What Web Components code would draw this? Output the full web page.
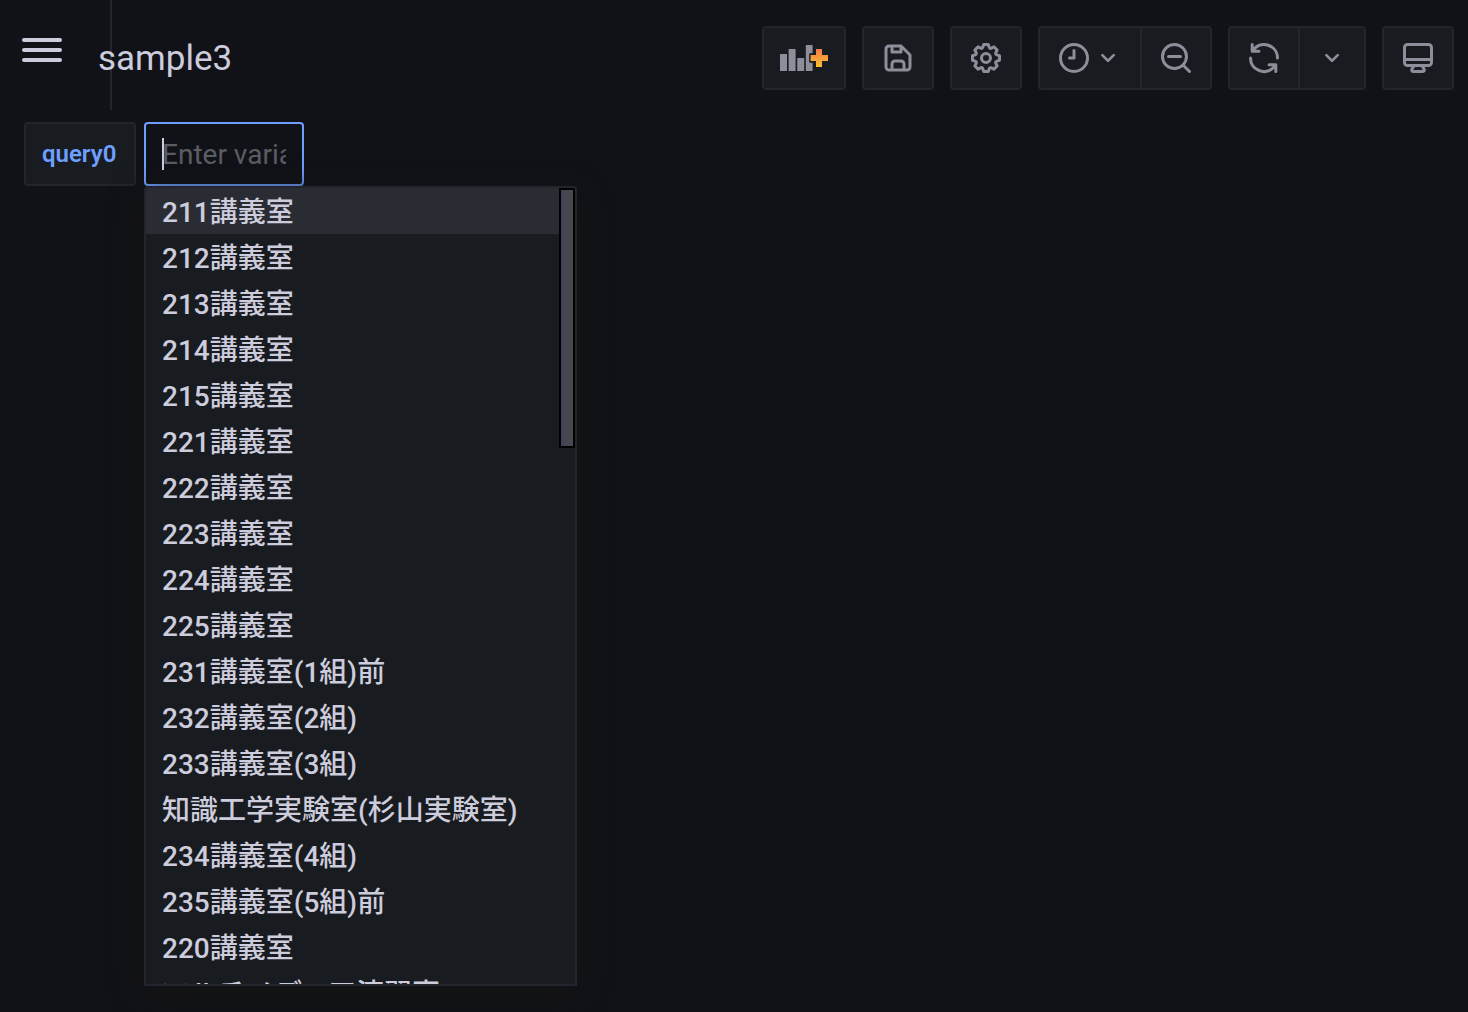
<!DOCTYPE html>
<html lang="ja">
<head>
<meta charset="utf-8">
<meta name="viewport" content="width=device-width, initial-scale=1">
<title>sample3</title>
<style>
body {
  --bg: #111217;
  --panel: #181b1f;
  --border: #22252b;
  --hover: #2a2c34;
  --text: #ccccdc;
  --muted: #8e8e9b;
  --blue: #6e9fff;
  margin: 0;
  background: var(--bg);
  color: var(--text);
  font-family: Roboto, "Noto Sans CJK JP", sans-serif;
  font-size: 28px;
}
</style>
</head>
<body>
<dashboard-page>
  <dashboard-toolbar slot="header" heading="sample3"></dashboard-toolbar>
  <variable-picker label="query0"></variable-picker>
</dashboard-page>

<script>
const ICONS = {
  save: 'M20.71,9.29l-6-6a1,1,0,0,0-.32-.21A1.09,1.09,0,0,0,14,3H6A3,3,0,0,0,3,6V18a3,3,0,0,0,3,3H18a3,3,0,0,0,3-3V10A1,1,0,0,0,20.71,9.29ZM9,5h4V7H9Zm6,14H9V16a1,1,0,0,1,1-1h4a1,1,0,0,1,1,1Zm4-1a1,1,0,0,1-1,1H17V16a3,3,0,0,0-3-3H10a3,3,0,0,0-3,3v3H6a1,1,0,0,1-1-1V6A1,1,0,0,1,6,5H7V8A1,1,0,0,0,8,9h6a1,1,0,0,0,1-1V6.41l4,4Z',
  cog: 'M21.32,9.55l-1.89-.63.89-1.78A1,1,0,0,0,20.13,6L18,3.87a1,1,0,0,0-1.15-.19l-1.78.89-.63-1.89A1,1,0,0,0,13.5,2h-3a1,1,0,0,0-.95.68L8.92,4.57,7.14,3.68A1,1,0,0,0,6,3.87L3.87,6a1,1,0,0,0-.19,1.15l.89,1.78-1.89.63A1,1,0,0,0,2,10.5v3a1,1,0,0,0,.68.95l1.89.63-.89,1.78A1,1,0,0,0,3.87,18L6,20.13a1,1,0,0,0,1.15.19l1.78-.89.63,1.89a1,1,0,0,0,.95.68h3a1,1,0,0,0,.95-.68l.63-1.89,1.78.89A1,1,0,0,0,18,20.13L20.13,18a1,1,0,0,0,.19-1.15l-.89-1.78,1.89-.63A1,1,0,0,0,22,13.5v-3A1,1,0,0,0,21.32,9.55ZM20,12.78l-1.2.4A2,2,0,0,0,17.64,16l.57,1.14-1.1,1.1L16,17.64a2,2,0,0,0-2.79,1.16l-.4,1.2H11.22l-.4-1.2A2,2,0,0,0,8,17.64l-1.14.57-1.1-1.1L6.36,16A2,2,0,0,0,5.2,13.18L4,12.78V11.22l1.2-.4A2,2,0,0,0,6.36,8L5.79,6.89l1.1-1.1L8,6.36A2,2,0,0,0,10.82,5.2l.4-1.2h1.56l.4,1.2A2,2,0,0,0,16,6.36l1.14-.57,1.1,1.1L17.64,8a2,2,0,0,0,1.16,2.79l1.2.4ZM12,8a4,4,0,1,0,4,4A4,4,0,0,0,12,8Zm0,6a2,2,0,1,1,2-2A2,2,0,0,1,12,14Z',
  clock: 'M12,2A10,10,0,1,0,22,12,10,10,0,0,0,12,2Zm0,18a8,8,0,1,1,8-8A8,8,0,0,1,12,20ZM12,6a1,1,0,0,0-1,1v4H9a1,1,0,0,0,0,2h3a1,1,0,0,0,1-1V7A1,1,0,0,0,12,6Z',
  down: 'M17,9.17a1,1,0,0,0-1.41,0L12,12.71,8.46,9.17a1,1,0,0,0-1.41,0,1,1,0,0,0,0,1.42l4.24,4.24a1,1,0,0,0,1.42,0L17,10.59A1,1,0,0,0,17,9.17Z',
  zoomout: 'M21.71,20.29,18,16.61A9,9,0,1,0,16.61,18l3.68,3.68a1,1,0,0,0,1.42,0A1,1,0,0,0,21.71,20.29ZM11,18a7,7,0,1,1,7-7A7,7,0,0,1,11,18Zm4-8H7a1,1,0,0,0,0,2h8a1,1,0,0,0,0-2Z',
  sync: 'M19.91,15.51H15.38a1,1,0,0,0,0,2h2.4A8,8,0,0,1,4,12a1,1,0,1,0-2,0,10,10,0,0,0,16.88,7.23V21a1,1,0,0,0,2,0V16.5A1,1,0,0,0,19.91,15.51ZM12,2A10,10,0,0,0,5.12,4.77V3a1,1,0,0,0-2,0V7.5a1,1,0,0,0,1,1h4.5a1,1,0,0,0,0-2H6.22A8,8,0,0,1,20,12a1,1,0,0,0,2,0A10,10,0,0,0,12,2Z',
  monitor: 'M19,2H5A3,3,0,0,0,2,5V15a3,3,0,0,0,3,3H7.64l-.58,1a2,2,0,0,0,0,2,2,2,0,0,0,1.75,1h6.46A2,2,0,0,0,17,21a2,2,0,0,0,0-2l-.59-1H19a3,3,0,0,0,3-3V5A3,3,0,0,0,19,2ZM8.77,20,10,18H14l1.2,2ZM20,15a1,1,0,0,1-1,1H5a1,1,0,0,1-1-1V14H20Zm0-3H4V5A1,1,0,0,1,5,4H19a1,1,0,0,1,1,1Z'
};

class UiIcon extends HTMLElement {
  constructor() {
    super();
    this.attachShadow({ mode: 'open' });
  }

  connectedCallback() {
    const name = this.getAttribute('name');
    const style = `
      <style>
        :host { display: block; width: 36px; height: 36px; }
        :host([name="down"]) { width: 32px; height: 32px; }
        :host([name="panel"]) { width: 48px; }
        svg { display: block; width: 100%; height: 100%; fill: currentColor; }
      </style>`;
    // the "add panel" icon is the only one in two colours
    if (name === 'panel') {
      this.shadowRoot.innerHTML = style + `
        <svg viewBox="0 0 48 36" aria-hidden="true">
          <defs>
            <linearGradient id="plus" x1="0" y1="0" x2="0" y2="1">
              <stop offset="0" stop-color="#f37b4b"/>
              <stop offset="1" stop-color="#fbc02d"/>
            </linearGradient>
          </defs>
          <rect x="0" y="14" width="7" height="17" rx="0.6"/>
          <rect x="8.6" y="9" width="7" height="22" rx="0.6"/>
          <rect x="17.2" y="18" width="7" height="13" rx="0.6"/>
          <path d="M26.4 5h5.6a.6.6 0 0 1 .6.6v7.6h-2.4a1 1 0 0 0-1 1v7.6a1 1 0 0 0 1 1h2.4v7.6a.6.6 0 0 1-.6.6h-5.6a.6.6 0 0 1-.6-.6V5.600a.6.6 0 0 1 .6-.6z"/>
          <path fill="url(#plus)" d="M36 9h6v6h6v6h-6v6h-6v-6h-5.400v-6h5.400z"/>
        </svg>`;
      return;
    }
    this.shadowRoot.innerHTML = style + `
      <svg viewBox="0 0 24 24" aria-hidden="true"><path d="${ICONS[name]}"/></svg>`;
  }
}

class ToolButton extends HTMLElement {
  constructor() {
    super();
    this.attachShadow({ mode: 'open' });
  }

  connectedCallback() {
    this.shadowRoot.innerHTML = `
      <style>
        :host { display: block; }
        button {
          display: flex;
          align-items: center;
          height: 64px;
          margin: 0;
          padding: 0 16px;
          border: 2px solid var(--border);
          border-radius: var(--radius, 4px);
          background: var(--panel);
          color: var(--muted);
          cursor: pointer;
        }
        button:hover { background: var(--hover); }
      </style>
      <button type="button" aria-label="${this.getAttribute('label')}"><slot></slot></button>`;
  }
}

class ButtonGroup extends HTMLElement {
  constructor() {
    super();
    this.attachShadow({ mode: 'open' });
    this.shadowRoot.innerHTML = `
      <style>
        :host { display: flex; }
        ::slotted(:first-child) { --radius: 4px 0 0 4px; }
        ::slotted(:last-child) { --radius: 0 4px 4px 0; margin-left: -2px; }
      </style>
      <slot></slot>`;
  }
}

class DashboardToolbar extends HTMLElement {
  constructor() {
    super();
    this.attachShadow({ mode: 'open' });
  }

  connectedCallback() {
    this.shadowRoot.innerHTML = `
      <style>
        :host { display: block; }
        header {
          display: flex;
          align-items: center;
          height: 116px;
          box-sizing: border-box;
          padding: 0 14px 0 22px;
        }
        .menu {
          display: flex;
          flex-direction: column;
          gap: 6px;
          width: 40px;
          margin: 0 36px 16px 0;
          padding: 0;
          border: 0;
          background: none;
          cursor: pointer;
        }
        .menu span { width: 40px; height: 4px; border-radius: 2px; background: var(--text); }
        .title { position: relative; flex: 1; padding-top: 2px; }
        h1 { margin: 0; font-size: 35px; line-height: 44px; font-weight: 400; }
        /* edge of the collapsed side menu, runs behind the title */
        .edge {
          position: absolute;
          left: 110px;
          top: 0;
          width: 2px;
          height: 110px;
          background: var(--border);
        }
        .actions { display: flex; gap: 16px; }
      </style>
      <div class="edge"></div>
      <header>
        <button class="menu" type="button" aria-label="Toggle menu"><span></span><span></span><span></span></button>
        <div class="title"><h1>${this.getAttribute('heading')}</h1></div>
        <div class="actions">
          <tool-button label="Add panel"><ui-icon name="panel"></ui-icon></tool-button>
          <tool-button label="Save dashboard"><ui-icon name="save"></ui-icon></tool-button>
          <tool-button label="Dashboard settings"><ui-icon name="cog"></ui-icon></tool-button>
          <button-group>
            <tool-button label="Time range"><ui-icon name="clock"></ui-icon><ui-icon name="down"></ui-icon></tool-button>
            <tool-button label="Zoom out"><ui-icon name="zoomout"></ui-icon></tool-button>
          </button-group>
          <button-group>
            <tool-button label="Refresh"><ui-icon name="sync"></ui-icon></tool-button>
            <tool-button label="Refresh interval"><ui-icon name="down"></ui-icon></tool-button>
          </button-group>
          <tool-button label="Cycle view mode"><ui-icon name="monitor"></ui-icon></tool-button>
        </div>
      </header>`;
  }
}

class VariablePicker extends HTMLElement {
  options = [
    '211講義室', '212講義室', '213講義室', '214講義室', '215講義室',
    '221講義室', '222講義室', '223講義室', '224講義室', '225講義室',
    '231講義室(1組)前', '232講義室(2組)', '233講義室(3組)',
    '知識工学実験室(杉山実験室)', '234講義室(4組)', '235講義室(5組)前',
    '220講義室', 'マルチメディア演習室'
  ];

  constructor() {
    super();
    this.attachShadow({ mode: 'open' });
  }

  connectedCallback() {
    this.shadowRoot.innerHTML = `
      <style>
        :host { display: flex; gap: 8px; }
        label {
          display: flex;
          align-items: center;
          min-width: 112px;
          height: 64px;
          box-sizing: border-box;
          padding: 0 16px;
          border: 2px solid var(--border);
          border-radius: 4px;
          background: var(--panel);
          color: var(--blue);
          font-size: 24px;
          font-weight: 600;
        }
        .field { position: relative; }
        input {
          display: block;
          width: 160px;
          height: 64px;
          box-sizing: border-box;
          padding: 0 16px;
          border: 2px solid var(--blue);
          border-radius: 4px;
          outline: none;
          background: var(--bg);
          color: var(--text);
          font: inherit;
        }
        input::placeholder { color: #5b5c64; opacity: 1; }
        .caret {
          position: absolute;
          left: 18px;
          top: 16px;
          width: 2px;
          height: 32px;
          background: var(--text);
        }
        .menu {
          position: absolute;
          left: 0;
          top: 100%;
          display: flex;
          width: 433px;
          max-height: 800px;
          box-sizing: border-box;
          border: 2px solid var(--border);
          border-radius: 4px 4px 0 0;
          background: var(--panel);
          box-shadow: 0 8px 32px #141414;
          overflow: hidden;
        }
        ul { flex: 1; margin: 0; padding: 0; list-style: none; }
        a {
          display: block;
          padding: 4px 16px 0;
          line-height: 42px;
          color: var(--text);
          font-weight: 500;
          text-decoration: none;
          white-space: nowrap;
        }
        a:hover, .active { background: var(--hover); }
        .thumb {
          width: 16px;
          height: 260px;
          box-sizing: border-box;
          border: 2px solid #000;
          background: linear-gradient(to right, #404357, #4a4a4c);
        }
      </style>
      <label for="variable">${this.getAttribute('label')}</label>
      <div class="field">
        <input id="variable" type="text" placeholder="Enter variable value" autocomplete="off">
        <div class="caret"></div>
        <div class="menu">
          <ul></ul>
          <div class="thumb"></div>
        </div>
      </div>`;
    this.renderOptions();
  }

  renderOptions() {
    const list = this.shadowRoot.querySelector('ul');
    this.options.forEach((option, i) => {
      const item = document.createElement('li');
      const link = document.createElement('a');
      link.href = '#';
      link.textContent = option;
      if (i === 0) link.className = 'active';
      item.appendChild(link);
      list.appendChild(item);
    });
  }
}

class DashboardPage extends HTMLElement {
  constructor() {
    super();
    this.attachShadow({ mode: 'open' });
    this.shadowRoot.innerHTML = `
      <style>
        :host { display: block; min-height: 100vh; box-sizing: border-box; }
        main { padding: 6px 24px; }
      </style>
      <slot name="header"></slot>
      <main><slot></slot></main>`;
  }
}

customElements.define('ui-icon', UiIcon);
customElements.define('tool-button', ToolButton);
customElements.define('button-group', ButtonGroup);
customElements.define('dashboard-toolbar', DashboardToolbar);
customElements.define('variable-picker', VariablePicker);
customElements.define('dashboard-page', DashboardPage);
</script>
</body>
</html>
